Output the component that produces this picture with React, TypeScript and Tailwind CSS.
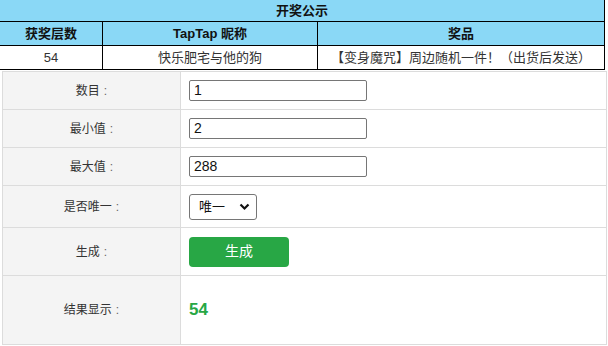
import React from "react";

const font = { fontFamily: '"Liberation Sans", "Noto Sans CJK SC", sans-serif' };

function Row({ label, h, children, last }: { label: string; h: string; children: React.ReactNode; last?: boolean }) {
  return (
    <div className={`flex ${h} ${last ? "" : "border-b border-[#dcdcdc]"}`}>
      <div className="w-[178px] shrink-0 bg-[#f4f4f4] border-r border-[#dcdcdc] flex items-center justify-center text-[12px] text-[#333]">
        <span>{label}</span>
        <span className="ml-[4px] text-[#666]">:</span>
      </div>
      <div className="flex-1 flex items-center pl-2">{children}</div>
    </div>
  );
}

export default function App() {
  return (
    <div className="w-[608px] h-[346px] bg-white overflow-hidden" style={font}>
      <div className="w-[605px] border-r border-b border-black">
        <div className="h-[22px] bg-[#8ad8f6] border-b border-black flex items-center justify-center text-[13px] font-bold text-[#111]">
          开奖公示
        </div>
        <div className="flex h-[24px] bg-[#8ad8f6] border-b border-black text-[13px] font-bold text-[#111]">
          <div className="w-[103px] border-r border-black flex items-center justify-center">获奖层数</div>
          <div className="w-[215px] border-r border-black flex items-center justify-center">TapTap 昵称</div>
          <div className="flex-1 flex items-center justify-center">奖品</div>
        </div>
        <div className="flex h-[23px] text-[13px] text-[#333]">
          <div className="w-[103px] border-r border-black flex items-center justify-center">54</div>
          <div className="w-[215px] border-r border-black flex items-center justify-center">快乐肥宅与他的狗</div>
          <div className="flex-1 flex items-center justify-center">【变身魔咒】周边随机一件！（出货后发送）</div>
        </div>
      </div>
      <div className="ml-[2px] mt-[1px] w-[605px] border border-[#dcdcdc]">
        <Row label="数目" h="h-[38px]">
          <input readOnly value="1" className="w-[178px] h-[21px] border border-[#767676] rounded-[2px] px-1 text-[14px] text-[#111] outline-none" />
        </Row>
        <Row label="最小值" h="h-[38px]">
          <input readOnly value="2" className="w-[178px] h-[21px] border border-[#767676] rounded-[2px] px-1 text-[14px] text-[#111] outline-none" />
        </Row>
        <Row label="最大值" h="h-[38px]">
          <input readOnly value="288" className="w-[178px] h-[21px] border border-[#767676] rounded-[2px] px-1 text-[14px] text-[#111] outline-none" />
        </Row>
        <Row label="是否唯一" h="h-[42px]">
          <div className="w-[68px] h-[26px] border border-[#767676] rounded-[3px] flex items-center justify-between pl-[9px] pr-[6px] text-[13px] text-[#111]">
            <span>唯一</span>
            <svg width="11" height="8" viewBox="0 0 11 8">
              <path d="M1.5 1.5 L5.5 5.5 L9.5 1.5" fill="none" stroke="#111" strokeWidth="2.2" />
            </svg>
          </div>
        </Row>
        <Row label="生成" h="h-[48px]">
          <button className="w-[100px] h-[30px] bg-[#28a745] rounded-[4px] text-white text-[14px]">生成</button>
        </Row>
        <Row label="结果显示" h="h-[68px]" last>
          <span className="text-[17px] font-bold text-[#28a745]">54</span>
        </Row>
      </div>
    </div>
  );
}
